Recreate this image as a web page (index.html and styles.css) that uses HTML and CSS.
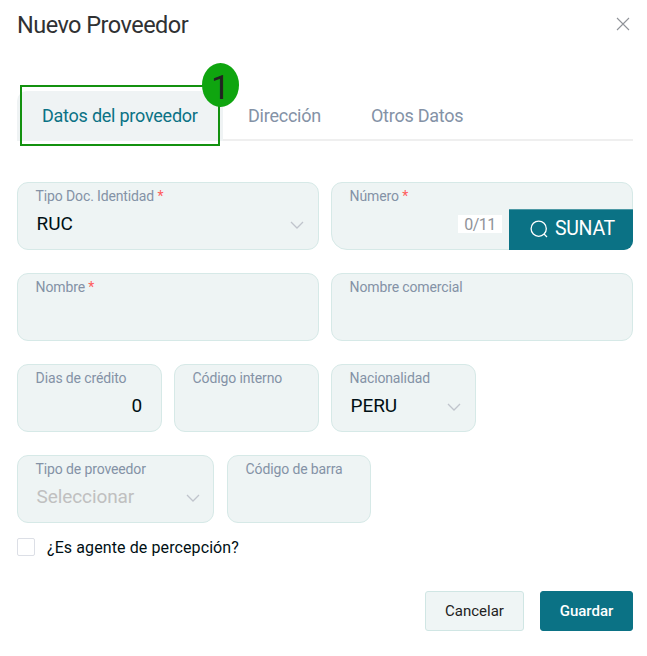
FILE: index.html
```html
<!DOCTYPE html>
<html lang="es">
<head>
<meta charset="utf-8">
<title>Nuevo Proveedor</title>
<link rel="stylesheet" href="styles.css">
</head>
<body>
<main class="dialog">
  <header class="header">
    <h1 class="title"><span>Nuevo Proveedor</span></h1>
    <svg class="close" viewBox="0 0 14 14"><path d="M1 1 13 13M13 1 1 13"/></svg>
  </header>
  <nav class="tabs">
    <div class="tab active"><span>Datos del proveedor</span>
      <div class="marker"><div class="step"><span>1</span></div></div>
    </div>
    <div class="tab"><span>Dirección</span></div>
    <div class="tab"><span>Otros Datos</span></div>
  </nav>
  <form class="form">
    <div class="row halves">
      <div class="field"><label><span>Tipo Doc. Identidad</span> <b>*</b></label>
        <div class="value"><span>RUC</span><svg class="chev" viewBox="0 0 14 8"><path d="M1 1 7 7 13 1"/></svg></div></div>
      <div class="field numero"><label><span>Número</span> <b>*</b></label>
        <div class="entry"><span class="count">0/11</span>
          <div class="sunat"><svg viewBox="0 0 18 18"><circle cx="8.7" cy="8.7" r="7.6"/><path d="m14 14 3 3"/></svg><span>SUNAT</span></div></div></div>
    </div>
    <div class="row halves">
      <div class="field"><label><span>Nombre</span> <b>*</b></label></div>
      <div class="field"><label><span>Nombre comercial</span></label></div>
    </div>
    <div class="row quarters">
      <div class="field"><label><span>Dias de crédito</span></label><div class="value number"><span>0</span></div></div>
      <div class="field"><label><span>Código interno</span></label></div>
      <div class="field"><label><span>Nacionalidad</span></label>
        <div class="value"><span>PERU</span><svg class="chev" viewBox="0 0 14 8"><path d="M1 1 7 7 13 1"/></svg></div></div>
    </div>
    <div class="row mixed">
      <div class="field"><label><span>Tipo de proveedor</span></label>
        <div class="value placeholder"><span>Seleccionar</span><svg class="chev" viewBox="0 0 14 8"><path d="M1 1 7 7 13 1"/></svg></div></div>
      <div class="field"><label><span>Código de barra</span></label></div>
    </div>
    <div class="check"><i class="box"></i><span>¿Es agente de percepción?</span></div>
  </form>
  <footer class="actions">
    <div class="btn"><span>Cancelar</span></div>
    <div class="btn primary"><span>Guardar</span></div>
  </footer>
</main>
</body>
</html>
```

FILE: styles.css
```css
* { box-sizing: border-box; }
body {
  margin: 0;
  background: #fff;
  font-family: Roboto, "Liberation Sans", sans-serif;
  color: #000f14;
}
svg { fill: none; display: block; }
.dialog { width: 647px; height: 656px; padding: 0 14px 0 17px; overflow: hidden; }
.header { display: flex; justify-content: space-between; height: 91px; padding-top: 9px; }
.title { margin: 0; font-size: 23.5px; line-height: 32px; font-weight: 400; letter-spacing: -0.53px; color: #303133; }
.close { width: 14px; height: 14px; margin: 8px 3px 0 0; stroke: #909399; stroke-width: 1.1; }
.tabs { display: flex; height: 50px; background: linear-gradient(#efefef, #efefef) 0 48px / 100% 2px no-repeat; }
.tab { padding: 0 25px; font-size: 18px; line-height: 50px; letter-spacing: -0.24px; color: #8492a6; white-space: nowrap; }
.tab.active {
  position: relative;
  width: 206px;
  color: #0b7285;
  background: #eff3f4;
  border-radius: 10px 0 0 0;
}
.marker { position: absolute; left: 3px; top: -6px; width: 200px; height: 61px; border: 2px solid #13910f; }
.step {
  position: absolute;
  right: -21px;
  top: -24px;
  width: 37px;
  height: 44px;
  border-radius: 50%;
  background: #0fa50f;
  color: #222;
  font-size: 33px;
  line-height: 49px;
  text-align: center;
}
.form { padding-top: 41px; }
.row { display: grid; height: 68px; gap: 12px; margin-bottom: 23px; }
.halves { grid-template-columns: 1fr 1fr; }
.quarters { grid-template-columns: repeat(3, 145px); }
.mixed { grid-template-columns: 197px 144px; gap: 13px; margin-bottom: 0; }
.field {
  border: 1px solid #d6e9e7;
  border-radius: 11px;
  background: #eef4f4;
  padding: 3px 14px 0 17.6px;
}
.field label { display: block; height: 20px; line-height: 20px; font-size: 14px; letter-spacing: -0.13px; color: #8492a6; white-space: nowrap; }
.field b { color: #ff5c5c; font-weight: 400; }
.value {
  display: flex;
  justify-content: space-between;
  align-items: center;
  padding-left: 1px;
  height: 34px;
  font-size: 19px;
  letter-spacing: -0.1px;
}
.number { justify-content: flex-end; padding-right: 5px; }
.placeholder { color: #c0c0c0; }
.placeholder .chev { margin-right: -1px; }
.chev { width: 14px; height: 8px; margin-top: 3px; stroke: #c0c4cc; stroke-width: 1.3; }
.numero { padding-right: 0; border-radius: 11px 11px 11px 16px; }
.entry { display: flex; justify-content: flex-end; margin: 0 -1px -1px 0; padding-top: 3px; }
.count { width: 44px; height: 18px; margin: 6px 7px 0 0; background: #fff; color: #909399; font-size: 16px; line-height: 19px; text-align: center; letter-spacing: -0.5px; }
.sunat {
  display: flex;
  align-items: center;
  gap: 7px;
  width: 124px;
  height: 41px;
  padding: 0 0 3px 21px;
  border-top: 1px solid #4d99a5;
  border-radius: 0 0 9px 0;
  background: #0b7285;
  color: #fff;
  font-size: 19.5px;
  font-weight: 400;
  letter-spacing: -0.3px;
}
.sunat svg { width: 18px; height: 18px; stroke: #fff; stroke-width: 1.3; }
.check { display: flex; align-items: center; gap: 12px; height: 20px; margin-top: 14px; font-size: 16px; letter-spacing: 0.1px; }
.box { width: 18px; height: 18px; border: 1px solid #dcdfe6; border-radius: 2px; }
.actions { display: flex; justify-content: flex-end; gap: 16px; padding-top: 34px; }
.btn {
  width: 99px;
  height: 40px;
  border: 1px solid #d0e6e4;
  border-radius: 3px;
  background: #eff5f5;
  font-size: 15px;
  line-height: 38px;
  text-align: center;
  color: #222;
}
.primary { width: 93px; background: #0b7285; border-color: #0b7285; color: #fff; font-weight: 500; }
```
